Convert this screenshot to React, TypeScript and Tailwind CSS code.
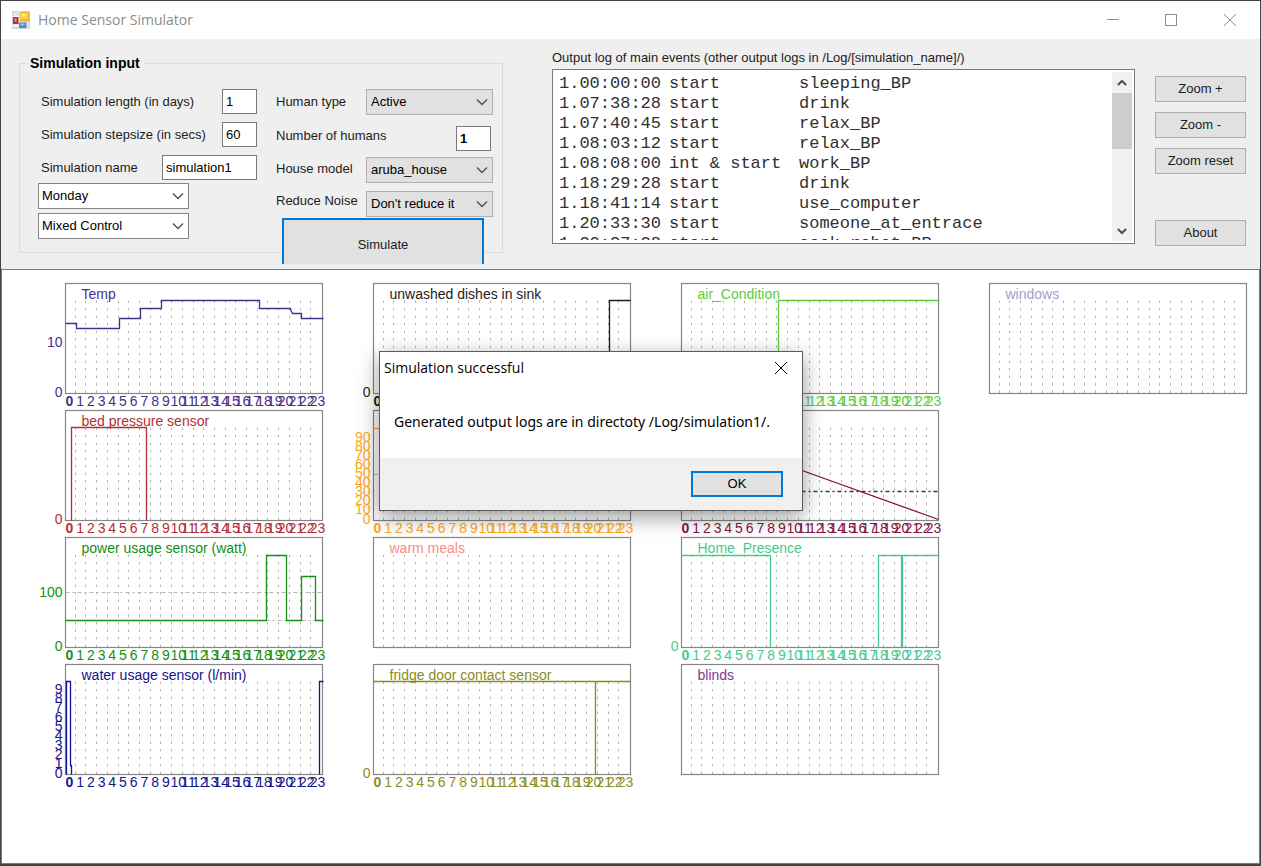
import React from "react";

type Label = { text: string; y: number };

type ChartSpec = {
  title: string;
  color: string;
  path?: string;
  hours?: boolean;
  yLabels?: Label[];
  guides?: { y: number; dark?: boolean; from?: number }[];
};

const zero: Label[] = [{ text: "0", y: 109 }];

const charts: ChartSpec[] = [
  {
    title: "Temp",
    color: "#483088",
    hours: true,
    yLabels: [{ text: "10", y: 59 }, ...zero],
    path: "M0 40H11V45H54V35H75V25H96V17H194V25H225V26L227 30H236V35H258",
  },
  {
    title: "bed pressure sensor",
    color: "#b22f36",
    hours: true,
    yLabels: zero,
    path: "M6 110V17H81V110",
  },
  {
    title: "power usage sensor (watt)",
    color: "#148f14",
    hours: true,
    yLabels: [{ text: "100", y: 55 }, ...zero],
    guides: [{ y: 55 }, { y: 83, from: 200 }],
    path: "M0 83H201V18H221V83H236V39H250V83H258",
  },
  {
    title: "water usage sensor (l/min)",
    color: "#14148f",
    hours: true,
    yLabels: Array.from({ length: 10 }, (_, i) => ({ text: String(i), y: 109 - i * 9.3 })),
    path: "M1 110V17H5V101H6V110M254 110V17H258",
  },
  {
    title: "unwashed dishes in sink",
    color: "#1c1c1c",
    hours: true,
    yLabels: zero,
    path: "M236 110V17H257",
  },
  {
    title: "",
    color: "#ffa918",
    hours: true,
    yLabels: Array.from({ length: 10 }, (_, i) => ({ text: String(i * 10), y: 109 - i * 9.1 })),
    guides: [{ y: 64 }],
    path: "M0 18H10",
  },
  { title: "warm meals", color: "#fa8c84" },
  {
    title: "fridge door contact sensor",
    color: "#8c8c1e",
    hours: true,
    yLabels: zero,
    path: "M0 17H257M222 17V110",
  },
  {
    title: "air_Condition",
    color: "#5fcb3c",
    hours: true,
    path: "M97 110V17H258",
  },
  {
    title: "",
    color: "#841440",
    hours: true,
    guides: [{ y: 81, dark: true }],
    path: "M115 58L257 109",
  },
  {
    title: "Home_Presence",
    color: "#48c890",
    hours: true,
    yLabels: zero,
    path: "M0 18H89V110M197 110V18H258M220 18V110M221 18V110",
  },
  { title: "blinds", color: "#7c3c90" },
  { title: "windows", color: "#a0a0d2" },
];

const hourStep = 257 / 24;

function Chart({ spec }: { spec: ChartSpec }) {
  return (
    <svg
      viewBox="0 0 308 127"
      className="block w-full overflow-visible font-['Liberation_Sans',sans-serif] text-[14px]"
      role="img"
      aria-label={spec.title || undefined}
    >
      <g transform="translate(47.5 7.5)">
        {Array.from({ length: 23 }, (_, i) => {
          const x = Math.round((i + 1) * hourStep - 1);
          return (
            <line
              key={i}
              x1={x}
              x2={x}
              y1={17}
              y2={110}
              stroke="#b4b4b4"
              strokeDasharray="2.5 5"
            />
          );
        })}
        {spec.guides?.map((g) => (
          <line
            key={g.y}
            x1={g.from ?? 0}
            x2={257}
            y1={g.y}
            y2={g.y}
            stroke={g.dark ? "#383838" : "#b4b4b4"}
            strokeWidth={g.dark ? 1.5 : 1}
            strokeDasharray="4 3 2 3"
          />
        ))}
        <rect width={257} height={110} fill="none" stroke="#868686" strokeWidth={1.2} />
        {spec.title && (
          <text x={16} y={15} fill={spec.color}>
            {spec.title}
          </text>
        )}
        {spec.path && <path d={spec.path} fill="none" stroke={spec.color} strokeWidth={1.3} />}
        {spec.yLabels?.map((l) => (
          <text key={l.text} x={-3} y={l.y + 4} textAnchor="end" fill={spec.color}>
            {l.text}
          </text>
        ))}
        {spec.hours &&
          Array.from({ length: 24 }, (_, i) => (
            <text
              key={i}
              x={i < 10 ? i * hourStep : i * hourStep - 2}
              y={122}
              fill={spec.color}
              className={i === 0 ? "font-bold" : ""}
            >
              {i}
            </text>
          ))}
      </g>
    </svg>
  );
}

const log: [string, string, string][] = [
  ["1.00:00:00", "start", "sleeping_BP"],
  ["1.07:38:28", "start", "drink"],
  ["1.07:40:45", "start", "relax_BP"],
  ["1.08:03:12", "start", "relax_BP"],
  ["1.08:08:00", "int & start", "work_BP"],
  ["1.18:29:28", "start", "drink"],
  ["1.18:41:14", "start", "use_computer"],
  ["1.20:33:30", "start", "someone_at_entrace"],
  ["1.20:37:28", "start", "cook_robot_BP"],
];

function Chevron({ className = "" }: { className?: string }) {
  return (
    <svg viewBox="0 0 12 8" className={className} fill="none" stroke="currentColor">
      <path d="M1 1.5L6 6.5L11 1.5" />
    </svg>
  );
}

function Drop({
  id,
  value,
  label,
  white,
}: {
  id: string;
  value: string;
  label?: string;
  white?: boolean;
}) {
  return (
    <div className="relative w-full">
      <select
        id={id}
        aria-label={label}
        className={
          white
            ? "block h-[26px] w-full appearance-none rounded-none border border-[#868686] bg-white pl-[3px] text-black"
            : "block h-[26px] w-full appearance-none rounded-none border border-[#b0b0b0] bg-[#e1e1e1] pl-1 text-black"
        }
        defaultValue={value}
      >
        <option>{value}</option>
      </select>
      <Chevron className="pointer-events-none absolute top-[9px] right-[5px] h-2 w-3 stroke-[1.4] text-[#505050]" />
    </div>
  );
}

const fieldClass = "h-[25px] rounded-none border border-[#7a7a7a] bg-white px-[3px] text-black";

function PushButton({ children }: { children: React.ReactNode }) {
  return (
    <button className="h-[26px] w-full border border-[#adadad] bg-[#e1e1e1] leading-5">
      {children}
    </button>
  );
}

function AppIcon() {
  return (
    <svg viewBox="0 0 18 18" className="h-[18px] w-[18px]">
      <rect x="0.5" y="0.5" width="17" height="17" fill="#e4e6e8" stroke="#cfd2d5" />
      <path d="M7.5 0V18M0 14.5H8M1 5.5H7" stroke="#fff" />
      <rect x="1" y="6" width="5.5" height="7" fill="#b8322a" />
      <rect x="2.5" y="7.5" width="2" height="3" fill="#ee9a86" />
      <rect x="7.5" y="1" width="10" height="9.5" fill="#f3b526" />
      <rect x="8.5" y="2" width="7.5" height="6" fill="#fbd14a" />
      <rect x="9.5" y="2.5" width="4" height="3" fill="#fde892" />
      <rect x="7" y="11.5" width="7.5" height="5.5" fill="#4c86e0" />
      <rect x="8.5" y="12.5" width="4" height="2" fill="#9cc4fa" />
    </svg>
  );
}

function CloseGlyph() {
  return (
    <svg viewBox="0 0 14 14" className="h-3.5 w-3.5" fill="none" stroke="currentColor">
      <path d="M1 1L13 13M13 1L1 13" />
    </svg>
  );
}

function TitleBar() {
  return (
    <header className="flex h-[38px] shrink-0 items-center gap-2 bg-white pl-[11px]">
      <AppIcon />
      <h1 className="flex-1 font-['Open_Sans',sans-serif] text-[14px] leading-5 text-[#8c8c8c]">
        Home Sensor Simulator
      </h1>
      <div className="flex h-full text-[#8c8c8c]">
        <button aria-label="Minimize" className="grid w-[58px] place-items-center">
          <svg viewBox="0 0 12 12" className="h-3 w-3" stroke="currentColor">
            <path d="M0 5.5H12" />
          </svg>
        </button>
        <button aria-label="Maximize" className="grid w-[58px] place-items-center">
          <svg viewBox="0 0 12 12" className="h-3 w-3" fill="none" stroke="currentColor">
            <rect x="0.5" y="0.5" width="11" height="11" />
          </svg>
        </button>
        <button aria-label="Close" className="grid w-[60px] place-items-center">
          <CloseGlyph />
        </button>
      </div>
    </header>
  );
}

function SimulationForm() {
  return (
    <fieldset className="mt-[13px] h-[200px] w-[484px] shrink-0 border border-[#dcdcdc] pl-[18px]">
      <legend className="-ml-3 px-1 text-[14px] leading-5 font-bold text-black">
        Simulation input
      </legend>
      <div className="mt-4 flex gap-[19px]">
        <div className="w-[219px]">
          <div className="flex justify-between pl-[3px]">
            <label htmlFor="days" className="leading-[25px]">
              Simulation length (in days)
            </label>
            <input id="days" defaultValue="1" className={`${fieldClass} w-[35px]`} />
          </div>
          <div className="mt-2 flex justify-between pl-[3px]">
            <label htmlFor="step" className="leading-[25px]">
              Simulation stepsize (in secs)
            </label>
            <input id="step" defaultValue="60" className={`${fieldClass} w-[35px]`} />
          </div>
          <div className="mt-2 flex justify-between pl-[3px]">
            <label htmlFor="name" className="leading-[25px]">
              Simulation name
            </label>
            <input id="name" defaultValue="simulation1" className={`${fieldClass} w-[95px]`} />
          </div>
          <div className="mt-[3px] flex w-[151px] flex-col gap-1">
            <Drop id="weekday" value="Monday" label="Start day" white />
            <Drop id="control" value="Mixed Control" label="Control mode" white />
          </div>
        </div>
        <div className="w-[217px]">
          <div className="grid grid-cols-[90px_1fr]">
            <label htmlFor="human" className="leading-[26px]">
              Human type
            </label>
            <Drop id="human" value="Active" />
          </div>
          <div className="mt-[11px] flex items-start justify-between pr-[2px]">
            <label htmlFor="count" className="leading-5">
              Number of humans
            </label>
            <input id="count" defaultValue="1" className={`${fieldClass} w-[35px] font-bold`} />
          </div>
          <div className="mt-[6px] grid grid-cols-[90px_1fr]">
            <label htmlFor="house" className="leading-6">
              House model
            </label>
            <Drop id="house" value="aruba_house" />
          </div>
          <div className="mt-2 grid grid-cols-[90px_1fr]">
            <label htmlFor="noise" className="leading-5">
              Reduce Noise
            </label>
            <Drop id="noise" value="Don't reduce it" />
          </div>
          <button className="mt-px ml-1.5 h-[46px] w-[202px] border-2 border-b-0 border-[#0078d7] bg-[#e1e1e1] pt-1.5">
            Simulate
          </button>
        </div>
      </div>
    </fieldset>
  );
}

function EventLog() {
  return (
    <section className="ml-[49px] min-w-0 flex-1 pt-[7px]">
      <h2 className="leading-[22px]">
        Output log of main events (other output logs in /Log/[simulation_name]/)
      </h2>
      <div className="flex h-[175px] border border-[#7a7a7a] bg-white p-[2px]">
        <div className="h-[168px] flex-1 overflow-hidden pt-0.5 pl-1 font-['Liberation_Mono',monospace] text-[17px] leading-5 text-[#303030]">
          {log.map(([time, kind, event]) => (
            <div key={time} className="grid grid-cols-[110px_130px_1fr] whitespace-nowrap">
              <span>{time}</span>
              <span>{kind}</span>
              <span>{event}</span>
            </div>
          ))}
        </div>
        <div className="flex w-5 flex-col bg-[#f0f0f0] text-[#505050]">
          <button aria-label="Scroll up" className="grid h-[21px] place-items-center">
            <Chevron className="h-2 w-2.5 rotate-180 stroke-[2.5]" />
          </button>
          <div className="h-14 bg-[#cdcdcd]" />
          <div className="flex-1" />
          <button aria-label="Scroll down" className="grid h-[21px] place-items-center">
            <Chevron className="h-2 w-2.5 stroke-[2.5]" />
          </button>
        </div>
      </div>
    </section>
  );
}

function ResultDialog() {
  return (
    <div
      role="dialog"
      aria-labelledby="result-title"
      className="absolute top-[350px] left-[378px] flex h-[160px] w-[424px] flex-col border border-[#5c5c5c] bg-white text-black shadow-[0_6px_20px_rgba(0,0,0,0.4)]"
    >
      <div className="flex h-8 items-center justify-between pr-3.5 pl-1">
        <h2 id="result-title" className="font-['Open_Sans',sans-serif] text-[14px] leading-5">
          Simulation successful
        </h2>
        <button aria-label="Close dialog">
          <CloseGlyph />
        </button>
      </div>
      <p className="flex-1 pt-7 pl-3.5 font-['Noto_Sans',sans-serif] text-[14px] leading-5 whitespace-nowrap">
        Generated output logs are in directoty /Log/simulation1/.
      </p>
      <div className="flex h-[52px] items-center justify-end bg-[#f0f0f0] pr-[19px]">
        <button className="h-[26px] w-[92px] border-2 border-[#0078d7] bg-[#e1e1e1] leading-5">
          OK
        </button>
      </div>
    </div>
  );
}

export default function App() {
  return (
    <div className="relative flex min-h-screen flex-col border border-b-2 border-[#444444] bg-[#efefef] font-['Liberation_Sans',sans-serif] text-[13px] text-[#1c1c1c]">
      <TitleBar />
      <div className="flex h-[230px] shrink-0 pt-px pr-3.5 pl-[18px]">
        <SimulationForm />
        <EventLog />
        <div className="ml-5 flex w-[91px] shrink-0 flex-col gap-2.5 pt-9">
          <PushButton>Zoom +</PushButton>
          <PushButton>Zoom -</PushButton>
          <PushButton>Zoom reset</PushButton>
          <div className="mt-9">
            <PushButton>About</PushButton>
          </div>
        </div>
      </div>
      <main className="flex-1 border border-[#7a7a7a] bg-white pt-1.5 pr-[9px] pl-4">
        <div className="grid grid-flow-col grid-cols-4 grid-rows-4">
          {charts.map((spec, i) => (
            <Chart key={i} spec={spec} />
          ))}
        </div>
      </main>
      <ResultDialog />
    </div>
  );
}
